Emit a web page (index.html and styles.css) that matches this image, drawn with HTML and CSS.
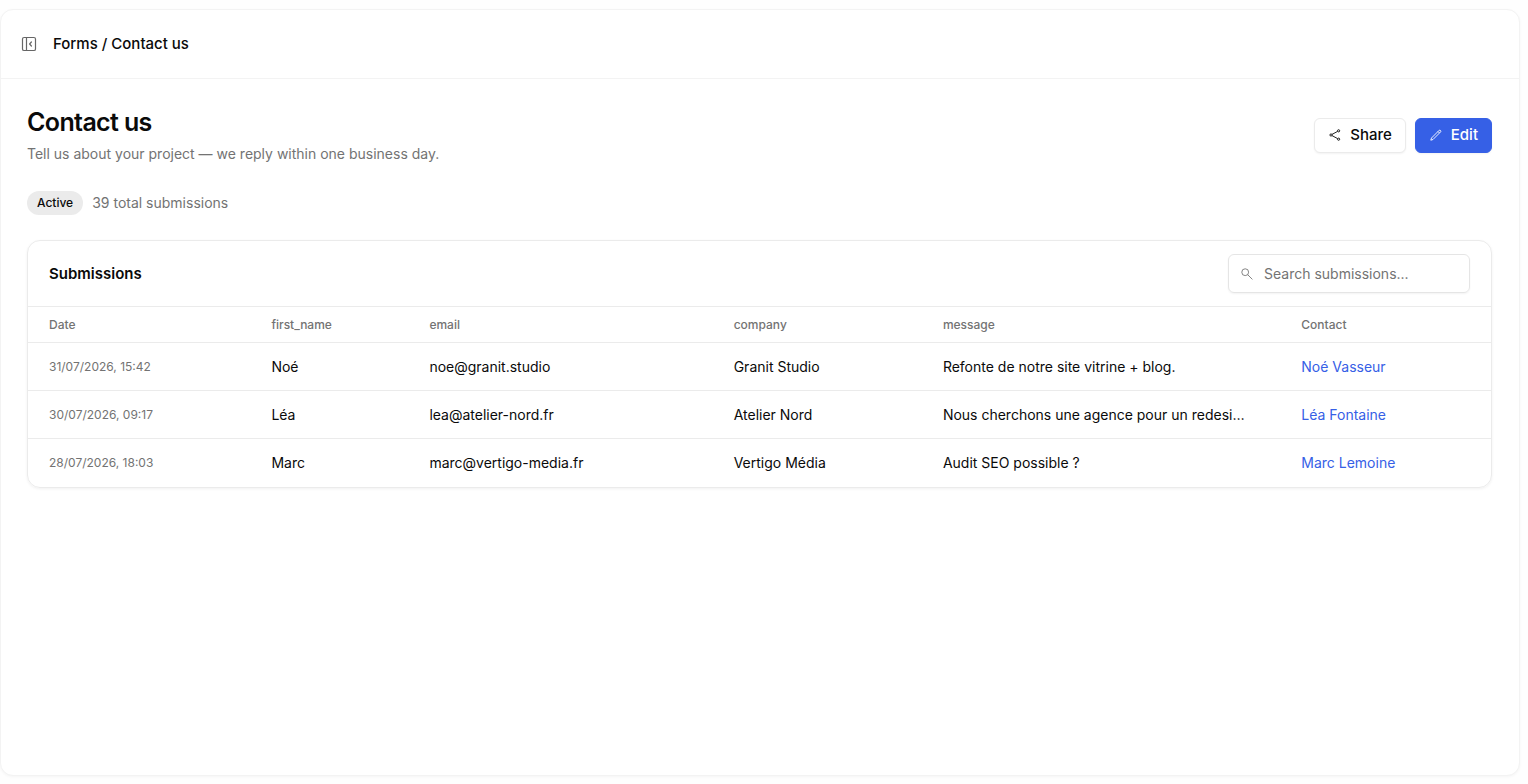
FILE: index.html
```
<!DOCTYPE html>
<html lang="en">
<head>
    <meta charset="UTF-8">
    <meta name="viewport" content="width=device-width, initial-scale=1">

    <title>Contact us</title>

    <link rel="stylesheet" href="styles.css">
</head>
    <body>
        <div class="panel">
            <header class="topbar">
                <button class="toggle" type="button" aria-label="Toggle sidebar">
                    <svg width="16" height="16" viewBox="0 0 16 16" fill="none" stroke="currentColor" stroke-width="1.2" stroke-linecap="round" stroke-linejoin="round">
                        <rect x="1.5" y="1.5" width="13" height="13" rx="1.6" />
                        <path d="M5.5 1.5v13M10.4 6 8.6 8l1.8 2" />
                    </svg>
                </button>
                <nav class="breadcrumb" aria-label="Breadcrumb">Forms / Contact us</nav>
            </header>

            <main class="content">
                <div class="heading">
                    <div>
                        <h1>Contact us</h1>
                        <p class="muted">Tell us about your project — we reply within one business day.</p>
                    </div>
                    <div class="actions">
                        <button class="btn" type="button">
                            <svg width="14" height="14" viewBox="0 0 14 14" fill="none" stroke="currentColor" stroke-width="0.9">
                                <circle cx="3" cy="7" r="1.1" />
                                <circle cx="10.6" cy="2.8" r="1.1" />
                                <circle cx="10.6" cy="11.2" r="1.1" />
                                <path d="M4 6.4 9.6 3.4M4 7.6l5.6 3" />
                            </svg>
                            Share
                        </button>
                        <button class="btn btn--primary" type="button">
                            <svg width="14" height="14" viewBox="0 0 14 14" fill="none" stroke="currentColor" stroke-width="0.9" stroke-linejoin="round">
                                <path d="M1.8 12.2 2.5 10l7.7-7.7a1.1 1.1 0 0 1 1.5 1.5L4 11.5ZM9 3.5l1.5 1.5" />
                            </svg>
                            Edit
                        </button>
                    </div>
                </div>

                <div class="status">
                    <span class="badge">Active</span>
                    <p class="muted">39 total submissions</p>
                </div>

                <section class="card">
                    <div class="card-header">
                        <h2>Submissions</h2>
                        <label class="search">
                            <svg width="14" height="14" viewBox="0 0 14 14" fill="none" stroke="currentColor" stroke-width="0.8">
                                <circle cx="5.2" cy="5.2" r="3.4" />
                                <path d="m7.7 7.7 4.7 4.7" />
                            </svg>
                            <input type="search" aria-label="Search submissions" placeholder="Search submissions..." />
                        </label>
                    </div>
                    <table>
                        <colgroup>
                            <col class="col-date">
                            <col class="col-name">
                            <col class="col-email">
                            <col class="col-company">
                            <col class="col-message">
                            <col class="col-contact">
                        </colgroup>
                        <thead>
                            <tr>
                                <th scope="col">Date</th>
                                <th scope="col">first_name</th>
                                <th scope="col">email</th>
                                <th scope="col">company</th>
                                <th scope="col">message</th>
                                <th scope="col">Contact</th>
                            </tr>
                        </thead>
                        <tbody>
                            <tr>
                                <td class="date">31/07/2026, 15:42</td>
                                <td>Noé</td>
                                <td>noe@granit.studio</td>
                                <td>Granit Studio</td>
                                <td>Refonte de notre site vitrine + blog.</td>
                                <td><a href="#">Noé Vasseur</a></td>
                            </tr>
                            <tr>
                                <td class="date">30/07/2026, 09:17</td>
                                <td>Léa</td>
                                <td>lea@atelier-nord.fr</td>
                                <td>Atelier Nord</td>
                                <td>Nous cherchons une agence pour un redesi…</td>
                                <td><a href="#">Léa Fontaine</a></td>
                            </tr>
                            <tr>
                                <td class="date">28/07/2026, 18:03</td>
                                <td>Marc</td>
                                <td>marc@vertigo-media.fr</td>
                                <td>Vertigo Média</td>
                                <td>Audit SEO possible ?</td>
                                <td><a href="#">Marc Lemoine</a></td>
                            </tr>
                        </tbody>
                    </table>
                </section>
            </main>
        </div>
    </body>
</html>
```
FILE: styles.css
```
* {
    box-sizing: border-box;
}

body {
    margin: 0;
    padding: 9px 8px 8px 0;
    min-height: 100vh;
    display: flex;
    background: #fefefe;
    color: #0a0a0a;
    font-family: Inter, "Liberation Sans", sans-serif;
    font-size: 14px;
    line-height: 22px;
}

h1,
h2,
p {
    margin: 0;
}

button,
input {
    font: inherit;
    color: inherit;
}

svg {
    flex: none;
}

.panel {
    flex: 1;
    min-width: 0;
    background: #fff;
    border: 1px solid #f3f3f3;
    border-radius: 13px;
    box-shadow: 0 1px 3px rgba(0, 0, 0, 0.04);
}

.topbar {
    display: flex;
    align-items: center;
    gap: 16px;
    height: 69px;
    padding: 0 20px;
    border-bottom: 1px solid #f3f3f3;
}

.toggle {
    display: flex;
    padding: 0;
    border: 0;
    background: none;
    color: #666;
}

.breadcrumb {
    font-size: 15px;
    font-weight: 500;
}

.content {
    padding: 26px 27px 26px 26px;
}

.heading {
    display: flex;
    align-items: center;
    justify-content: space-between;
}

h1 {
    font-size: 25px;
    font-weight: 600;
    line-height: 34px;
    letter-spacing: -0.025em;
    margin-bottom: 4px;
}

.muted {
    color: #737373;
}

.actions {
    display: flex;
    gap: 9px;
}

.btn {
    display: flex;
    align-items: center;
    gap: 8px;
    height: 35px;
    padding: 0 13px;
    background: #fff;
    border: 1px solid #ebebeb;
    border-radius: 6px;
    box-shadow: 0 1px 2px rgba(0, 0, 0, 0.05);
    font-size: 15px;
    font-weight: 500;
}

.btn--primary {
    background: #3660e6;
    border-color: #3660e6;
    color: #fff;
}

.status {
    display: flex;
    align-items: center;
    gap: 9px;
    margin: 26px 0 25px;
}

.badge {
    padding: 0 10px;
    border-radius: 12px;
    background: #ebebeb;
    font-size: 12px;
    font-weight: 500;
    line-height: 24px;
}

.card {
    border: 1px solid #ebebeb;
    border-radius: 13px;
    box-shadow: 0 1px 3px rgba(0, 0, 0, 0.06);
    overflow: hidden;
}

.card-header {
    display: flex;
    align-items: center;
    justify-content: space-between;
    padding: 13px 21px;
}

h2 {
    font-size: 15px;
    font-weight: 600;
}

.search {
    display: flex;
    align-items: center;
    gap: 10px;
    width: 242px;
    height: 39px;
    padding: 0 11px;
    border: 1px solid #e5e5e5;
    border-radius: 6px;
    box-shadow: 0 1px 2px rgba(0, 0, 0, 0.05);
    color: #666;
}

.search input {
    flex: 1;
    min-width: 0;
    padding: 0;
    border: 0;
    outline: 0;
    background: none;
}

.search input::placeholder {
    color: #737373;
}

table {
    width: 100%;
    table-layout: fixed;
    border-collapse: collapse;
}

.col-date { width: 15.2%; }
.col-name { width: 10.8%; }
.col-email { width: 20.8%; }
.col-company { width: 14.3%; }
.col-message { width: 24.5%; }
.col-contact { width: 14.4%; }

th,
td {
    padding: 0 0 0 21px;
    border-top: 1px solid #ebebeb;
    text-align: left;
    white-space: nowrap;
}

th {
    height: 36px;
    color: #737373;
    font-size: 12px;
    font-weight: 500;
}

td {
    height: 48px;
}

.date {
    color: #737373;
    font-size: 12px;
}

a {
    color: #3660e6;
    text-decoration: none;
}
```
